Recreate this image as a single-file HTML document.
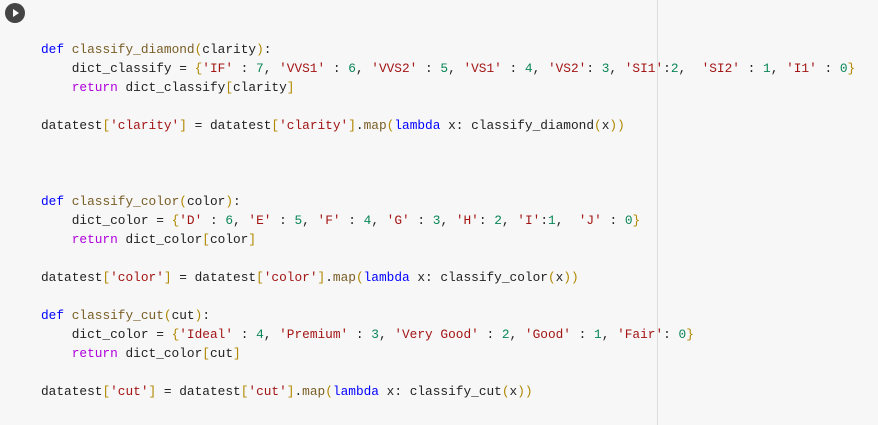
<!DOCTYPE html>
<html><head><meta charset="utf-8"><style>
html,body{margin:0;padding:0;width:878px;height:425px;background:#f7f7f7;overflow:hidden}
.run{position:absolute;left:5px;top:3px;width:20px;height:20px;border-radius:50%;background:#444}
.run:after{content:"";position:absolute;left:8px;top:6px;border-left:6px solid #fff;border-top:4px solid transparent;border-bottom:4px solid transparent}
.vl{position:absolute;left:657px;top:0;width:1px;height:425px;background:#ddd}
pre{position:absolute;left:41px;top:40px;margin:0;font-family:"Liberation Mono",monospace;font-size:12.8px;line-height:19px;color:#222}
.k{color:#0000ff}.f{color:#795e26}.s{color:#a31515}.n{color:#098658}.r{color:#af00db}.b{color:#b08800}.p{color:#001080}
</style></head><body>
<div class="run"></div><div class="vl"></div>
<pre><span class="k">def</span> <span class="f">classify_diamond</span><span class="b">(</span>clarity<span class="b">)</span>:
    dict_classify = <span class="b">{</span><span class="s">'IF'</span> : <span class="n">7</span>, <span class="s">'VVS1'</span> : <span class="n">6</span>, <span class="s">'VVS2'</span> : <span class="n">5</span>, <span class="s">'VS1'</span> : <span class="n">4</span>, <span class="s">'VS2'</span>: <span class="n">3</span>, <span class="s">'SI1'</span>:<span class="n">2</span>,  <span class="s">'SI2'</span> : <span class="n">1</span>, <span class="s">'I1'</span> : <span class="n">0</span><span class="b">}</span>
    <span class="r">return</span> dict_classify<span class="b">[</span>clarity<span class="b">]</span>

datatest<span class="b">[</span><span class="s">'clarity'</span><span class="b">]</span> = datatest<span class="b">[</span><span class="s">'clarity'</span><span class="b">]</span>.<span class="f">map</span><span class="b">(</span><span class="k">lambda</span> x: classify_diamond<span class="b">(</span>x<span class="b">))</span>



<span class="k">def</span> <span class="f">classify_color</span><span class="b">(</span>color<span class="b">)</span>:
    dict_color = <span class="b">{</span><span class="s">'D'</span> : <span class="n">6</span>, <span class="s">'E'</span> : <span class="n">5</span>, <span class="s">'F'</span> : <span class="n">4</span>, <span class="s">'G'</span> : <span class="n">3</span>, <span class="s">'H'</span>: <span class="n">2</span>, <span class="s">'I'</span>:<span class="n">1</span>,  <span class="s">'J'</span> : <span class="n">0</span><span class="b">}</span>
    <span class="r">return</span> dict_color<span class="b">[</span>color<span class="b">]</span>

datatest<span class="b">[</span><span class="s">'color'</span><span class="b">]</span> = datatest<span class="b">[</span><span class="s">'color'</span><span class="b">]</span>.<span class="f">map</span><span class="b">(</span><span class="k">lambda</span> x: classify_color<span class="b">(</span>x<span class="b">))</span>

<span class="k">def</span> <span class="f">classify_cut</span><span class="b">(</span>cut<span class="b">)</span>:
    dict_color = <span class="b">{</span><span class="s">'Ideal'</span> : <span class="n">4</span>, <span class="s">'Premium'</span> : <span class="n">3</span>, <span class="s">'Very Good'</span> : <span class="n">2</span>, <span class="s">'Good'</span> : <span class="n">1</span>, <span class="s">'Fair'</span>: <span class="n">0</span><span class="b">}</span>
    <span class="r">return</span> dict_color<span class="b">[</span>cut<span class="b">]</span>

datatest<span class="b">[</span><span class="s">'cut'</span><span class="b">]</span> = datatest<span class="b">[</span><span class="s">'cut'</span><span class="b">]</span>.<span class="f">map</span><span class="b">(</span><span class="k">lambda</span> x: classify_cut<span class="b">(</span>x<span class="b">))</span></pre>
</body></html>
